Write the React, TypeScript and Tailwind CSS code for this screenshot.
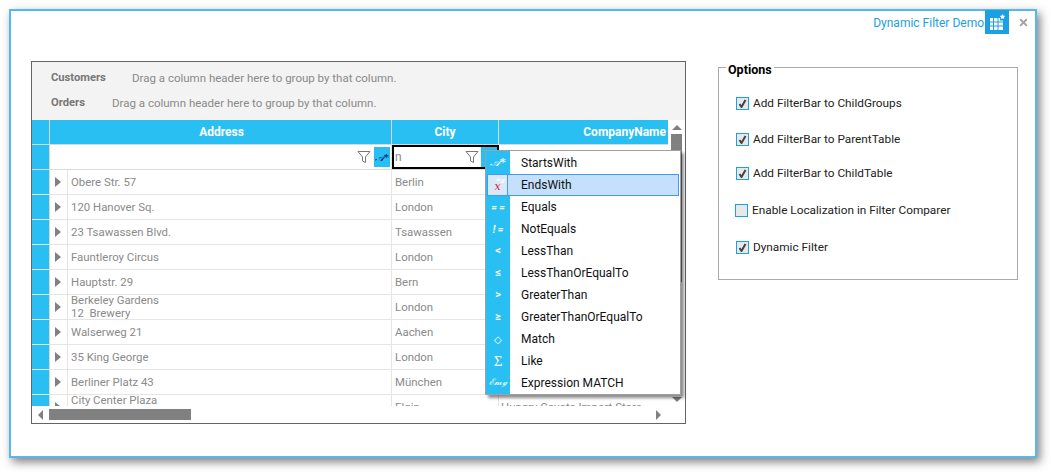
import { X } from 'lucide-react'

const rows = [
  { address: 'Obere Str. 57', city: 'Berlin' },
  { address: '120 Hanover Sq.', city: 'London' },
  { address: '23 Tsawassen Blvd.', city: 'Tsawassen' },
  { address: 'Fauntleroy Circus', city: 'London' },
  { address: 'Hauptstr. 29', city: 'Bern' },
  { address: 'Berkeley Gardens', address2: '12  Brewery', city: 'London' },
  { address: 'Walserweg 21', city: 'Aachen' },
  { address: '35 King George', city: 'London' },
  { address: 'Berliner Platz 43', city: 'München' },
  { address: 'City Center Plaza', address2: '516 Main St.', city: 'Elgin', company: 'Hungry Coyote Import Store' },
]

const comparers = [
  { label: 'StartsWith', glyph: '𝒜*', cls: 'font-["DejaVu_Serif",serif] italic text-[11px]' },
  { label: 'EndsWith', glyph: '', cls: '' },
  { label: 'Equals', glyph: '= =', cls: 'font-bold text-[10px] italic' },
  { label: 'NotEquals', glyph: '! =', cls: 'font-bold text-[10px] italic' },
  { label: 'LessThan', glyph: '<', cls: 'font-bold text-[11px]' },
  { label: 'LessThanOrEqualTo', glyph: '≤', cls: 'font-bold text-[11px]' },
  { label: 'GreaterThan', glyph: '>', cls: 'font-bold text-[11px]' },
  { label: 'GreaterThanOrEqualTo', glyph: '≥', cls: 'font-bold text-[11px]' },
  { label: 'Match', glyph: '◇', cls: 'text-[10px]' },
  { label: 'Like', glyph: 'Σ', cls: 'font-["Liberation_Serif",serif] text-[15px]' },
  { label: 'Expression MATCH', glyph: 'ℰ𝓂𝓎', cls: 'font-["DejaVu_Serif",serif] italic text-[9px]' },
]

const options = [
  { label: 'Add FilterBar to ChildGroups', checked: true, cls: 'mt-[29px] ml-[17px]' },
  { label: 'Add FilterBar to ParentTable', checked: true, cls: 'mt-[23px] ml-[17px]' },
  { label: 'Add FilterBar to ChildTable', checked: true, cls: 'mt-[21px] ml-[17px]' },
  { label: 'Enable Localization in Filter Comparer', checked: false, cls: 'mt-[24px] ml-[16px]' },
  { label: 'Dynamic Filter', checked: true, cls: 'mt-[24px] ml-[17px]' },
]

const Funnel = () => (
  <svg width="14" height="14" viewBox="0 0 14 14" fill="none" stroke="#777" strokeWidth="1">
    <path d="M1 1.5h12L8.5 7v5.5l-3-1.5V7z" />
  </svg>
)

const Triangle = () => <div className="w-0 h-0 border-y-[5px] border-y-transparent border-l-[6px] border-l-[#808080]" />

const FilterButton = ({ children }: { children?: React.ReactNode }) => (
  <div className="w-[16px] h-[20px] bg-[#29bff2] flex items-center justify-center text-[#10106a] italic text-[10px] font-['DejaVu_Serif',serif] whitespace-nowrap">
    {children}
  </div>
)

const App = () => {
  return (
    <div className="w-[1051px] h-[472px] bg-white overflow-hidden pt-[9px] pl-[9px] font-['Roboto',sans-serif] text-[12px]">
      <div className="relative w-[1028px] h-[449px] bg-white border-2 border-[#56b8ec] shadow-[3px_4px_9px_rgba(0,0,0,0.5)]">
        <div className="h-[24px] flex justify-end items-start">
          <span className="mt-[3px] mr-px text-[#1ba1e2] leading-[18px]">Dynamic Filter Demo</span>
          <div className="-mt-px w-[24px] h-[24px] bg-[#1ba1e2] flex items-center justify-center">
            <svg width="17" height="17" viewBox="0 0 17 17" fill="none">
              <path d="M1 4h10v2.5h3V16H1z" fill="#fff" />
              <path d="M1 8h13M1 12h13M4.500 4v12M9 4v12" stroke="#1ba1e2" strokeWidth="1" />
              <path d="M13.500 0l.9 1.600 1.700.4-1.200 1.200.3 1.800-1.700-.8-1.700.8.3-1.800L10.900 2l1.700-.4z" fill="#fff" />
            </svg>
          </div>
          <div className="w-[26px] h-[23px] flex items-center justify-center pl-[2px]">
            <X size={11} strokeWidth={4} color="#a3a3a3" />
          </div>
        </div>

        <div className="flex items-start pl-[20px] mt-[26px]">
          <div className="relative w-[655px] h-[363px] border border-[#646464] bg-white text-[#8a8a8a]">
            <div className="h-[58px] bg-[#f3f3f3] pl-[19px] pt-[4px] text-[11.5px]">
              <div className="h-[25px] flex items-center">
                <span className="w-[81px] font-bold text-[#777] text-[11.2px]">Customers</span>
                <span>Drag a column header here to group by that column.</span>
              </div>
              <div className="h-[25px] flex items-center">
                <span className="w-[61px] font-bold text-[#777] text-[11.2px]">Orders</span>
                <span>Drag a column header here to group by that column.</span>
              </div>
            </div>

            <div className="flex h-[286px]">
              <div className="w-[636px] overflow-hidden">
                <div className="grid grid-cols-[18px_342px_107px_169px] h-[25px] bg-[#29bff2] text-white font-bold border-b border-[#d8d8d8]">
                  <div className="border-r border-[#d8d8d8]" />
                  <div className="border-r border-[#d8d8d8] text-center leading-[24px] pl-[2px]">Address</div>
                  <div className="border-r border-[#d8d8d8] text-center leading-[24px]">City</div>
                  <div className="text-right pr-[2px] leading-[24px]">CompanyName</div>
                </div>

                <div className="grid grid-cols-[18px_342px_107px_169px] h-[25px] border-b border-[#d5dbe0]">
                  <div className="bg-[#29bff2] border-r border-[#d8d8d8]" />
                  <div className="flex items-center justify-end gap-[3px] pr-[1px] border-r border-[#e3e3e3]">
                    <Funnel />
                    <FilterButton>𝒜*</FilterButton>
                  </div>
                  <div className="flex items-center justify-between border-2 border-black pl-[1px] pr-0 text-[#8a8a8a]">
                    <span>n</span>
                    <div className="flex items-center gap-[2px]">
                      <Funnel />
                      <FilterButton />
                    </div>
                  </div>
                  <div />
                </div>

                <div className="h-[236px] overflow-hidden text-[11.4px]">
                  {rows.map((row) => (
                    <div key={row.address} className="grid grid-cols-[18px_18px_324px_107px_169px] h-[25px] shrink-0 border-b border-[#e5e5e5]">
                      <div className="bg-[#29bff2] border-r border-[#d8d8d8]" />
                      <div className="flex items-center justify-center pr-px border-r border-[#e5e5e5]">
                        <Triangle />
                      </div>
                      <div className="pl-[3px] border-r border-[#e5e5e5] flex flex-col justify-center overflow-hidden leading-[13px] whitespace-pre">
                        <span>{row.address}</span>
                        {row.address2 && <span>{row.address2}</span>}
                      </div>
                      <div className="pl-[3px] pt-px border-r border-[#e5e5e5] flex items-center">{row.city}</div>
                      <div className="pl-[2px] pt-px flex items-center whitespace-nowrap overflow-hidden">{row.company}</div>
                    </div>
                  ))}
                </div>
              </div>

              <div className="w-[17px] flex flex-col items-center justify-between pt-[5px] pb-[4px]">
                <div className="w-0 h-0 border-x-[5px] border-x-transparent border-b-[5px] border-b-[#808080]" />
                <div className="w-[11px] h-[148px] bg-[#808080] mt-[4px] mb-auto" />
                <div className="w-0 h-0 border-x-[5px] border-x-transparent border-t-[5px] border-t-[#808080]" />
              </div>
            </div>

            <div className="h-[17px] flex items-center pl-[6px]">
              <div className="w-0 h-0 border-y-[5px] border-y-transparent border-r-[5px] border-r-[#808080]" />
              <div className="ml-[6px] w-[142px] h-[11px] bg-[#808080]" />
              <div className="ml-[465px] w-0 h-0 border-y-[5px] border-y-transparent border-l-[5px] border-l-[#808080]" />
            </div>

            <div className="absolute left-[453px] top-[88px] w-[196px] h-[245px] bg-white border border-[#a0a0a0] shadow-[3px_3px_3px_rgba(0,0,0,0.45)] flex">
              <div className="absolute left-0 top-0 bottom-0 w-[24px] bg-[#29bff2]" />
              <div className="relative w-full pt-px">
                {comparers.map((item) =>
                  item.label === 'EndsWith' ? (
                    <div key={item.label} className="h-[22px] flex items-center border border-[#3f9bf5] bg-[#c4e0fc] ml-px mr-px text-[#111]">
                      <div className="relative w-[20px] h-full bg-[#d8e8f8] border-r border-[#3f9bf5] flex items-center justify-center pt-[4px] font-['DejaVu_Serif',serif] italic text-[#d8202f] text-[11px]">
                        x
                        <span className="absolute right-[2px] top-0 text-white text-[8px] leading-[10px] font-bold">*z</span>
                      </div>
                      <span className="ml-[13px]">{item.label}</span>
                    </div>
                  ) : (
                    <div key={item.label} className="h-[22px] flex items-center text-[#111]">
                      <span className={`w-[24px] text-center text-white whitespace-nowrap ${item.cls}`}>{item.glyph}</span>
                      <span className="ml-[11px]">{item.label}</span>
                    </div>
                  ),
                )}
              </div>
            </div>
          </div>

          <div className="relative ml-[32px] mt-[6px] w-[300px] h-[213px] border border-[#aaa] flex flex-col text-[#222] text-[11.8px]">
            <span className="absolute -top-[6px] left-[7px] px-[2px] bg-white font-bold text-black leading-[16px] text-[12.5px]">Options</span>
            {options.map((opt) => (
              <div key={opt.label} className={`flex items-center h-[13px] ${opt.cls}`}>
                <div className="w-[13px] h-[13px] border border-[#1ba1e2] bg-[#e8e8e8] flex items-center justify-center">
                  {opt.checked && (
                    <svg width="9" height="9" viewBox="0 0 9 9" fill="none" stroke="#444" strokeWidth="2">
                      <path d="M1.500 5l2 3 4-7" />
                    </svg>
                  )}
                </div>
                <span className="ml-[4px] whitespace-nowrap">{opt.label}</span>
              </div>
            ))}
          </div>
        </div>
      </div>
    </div>
  )
}

export default App
